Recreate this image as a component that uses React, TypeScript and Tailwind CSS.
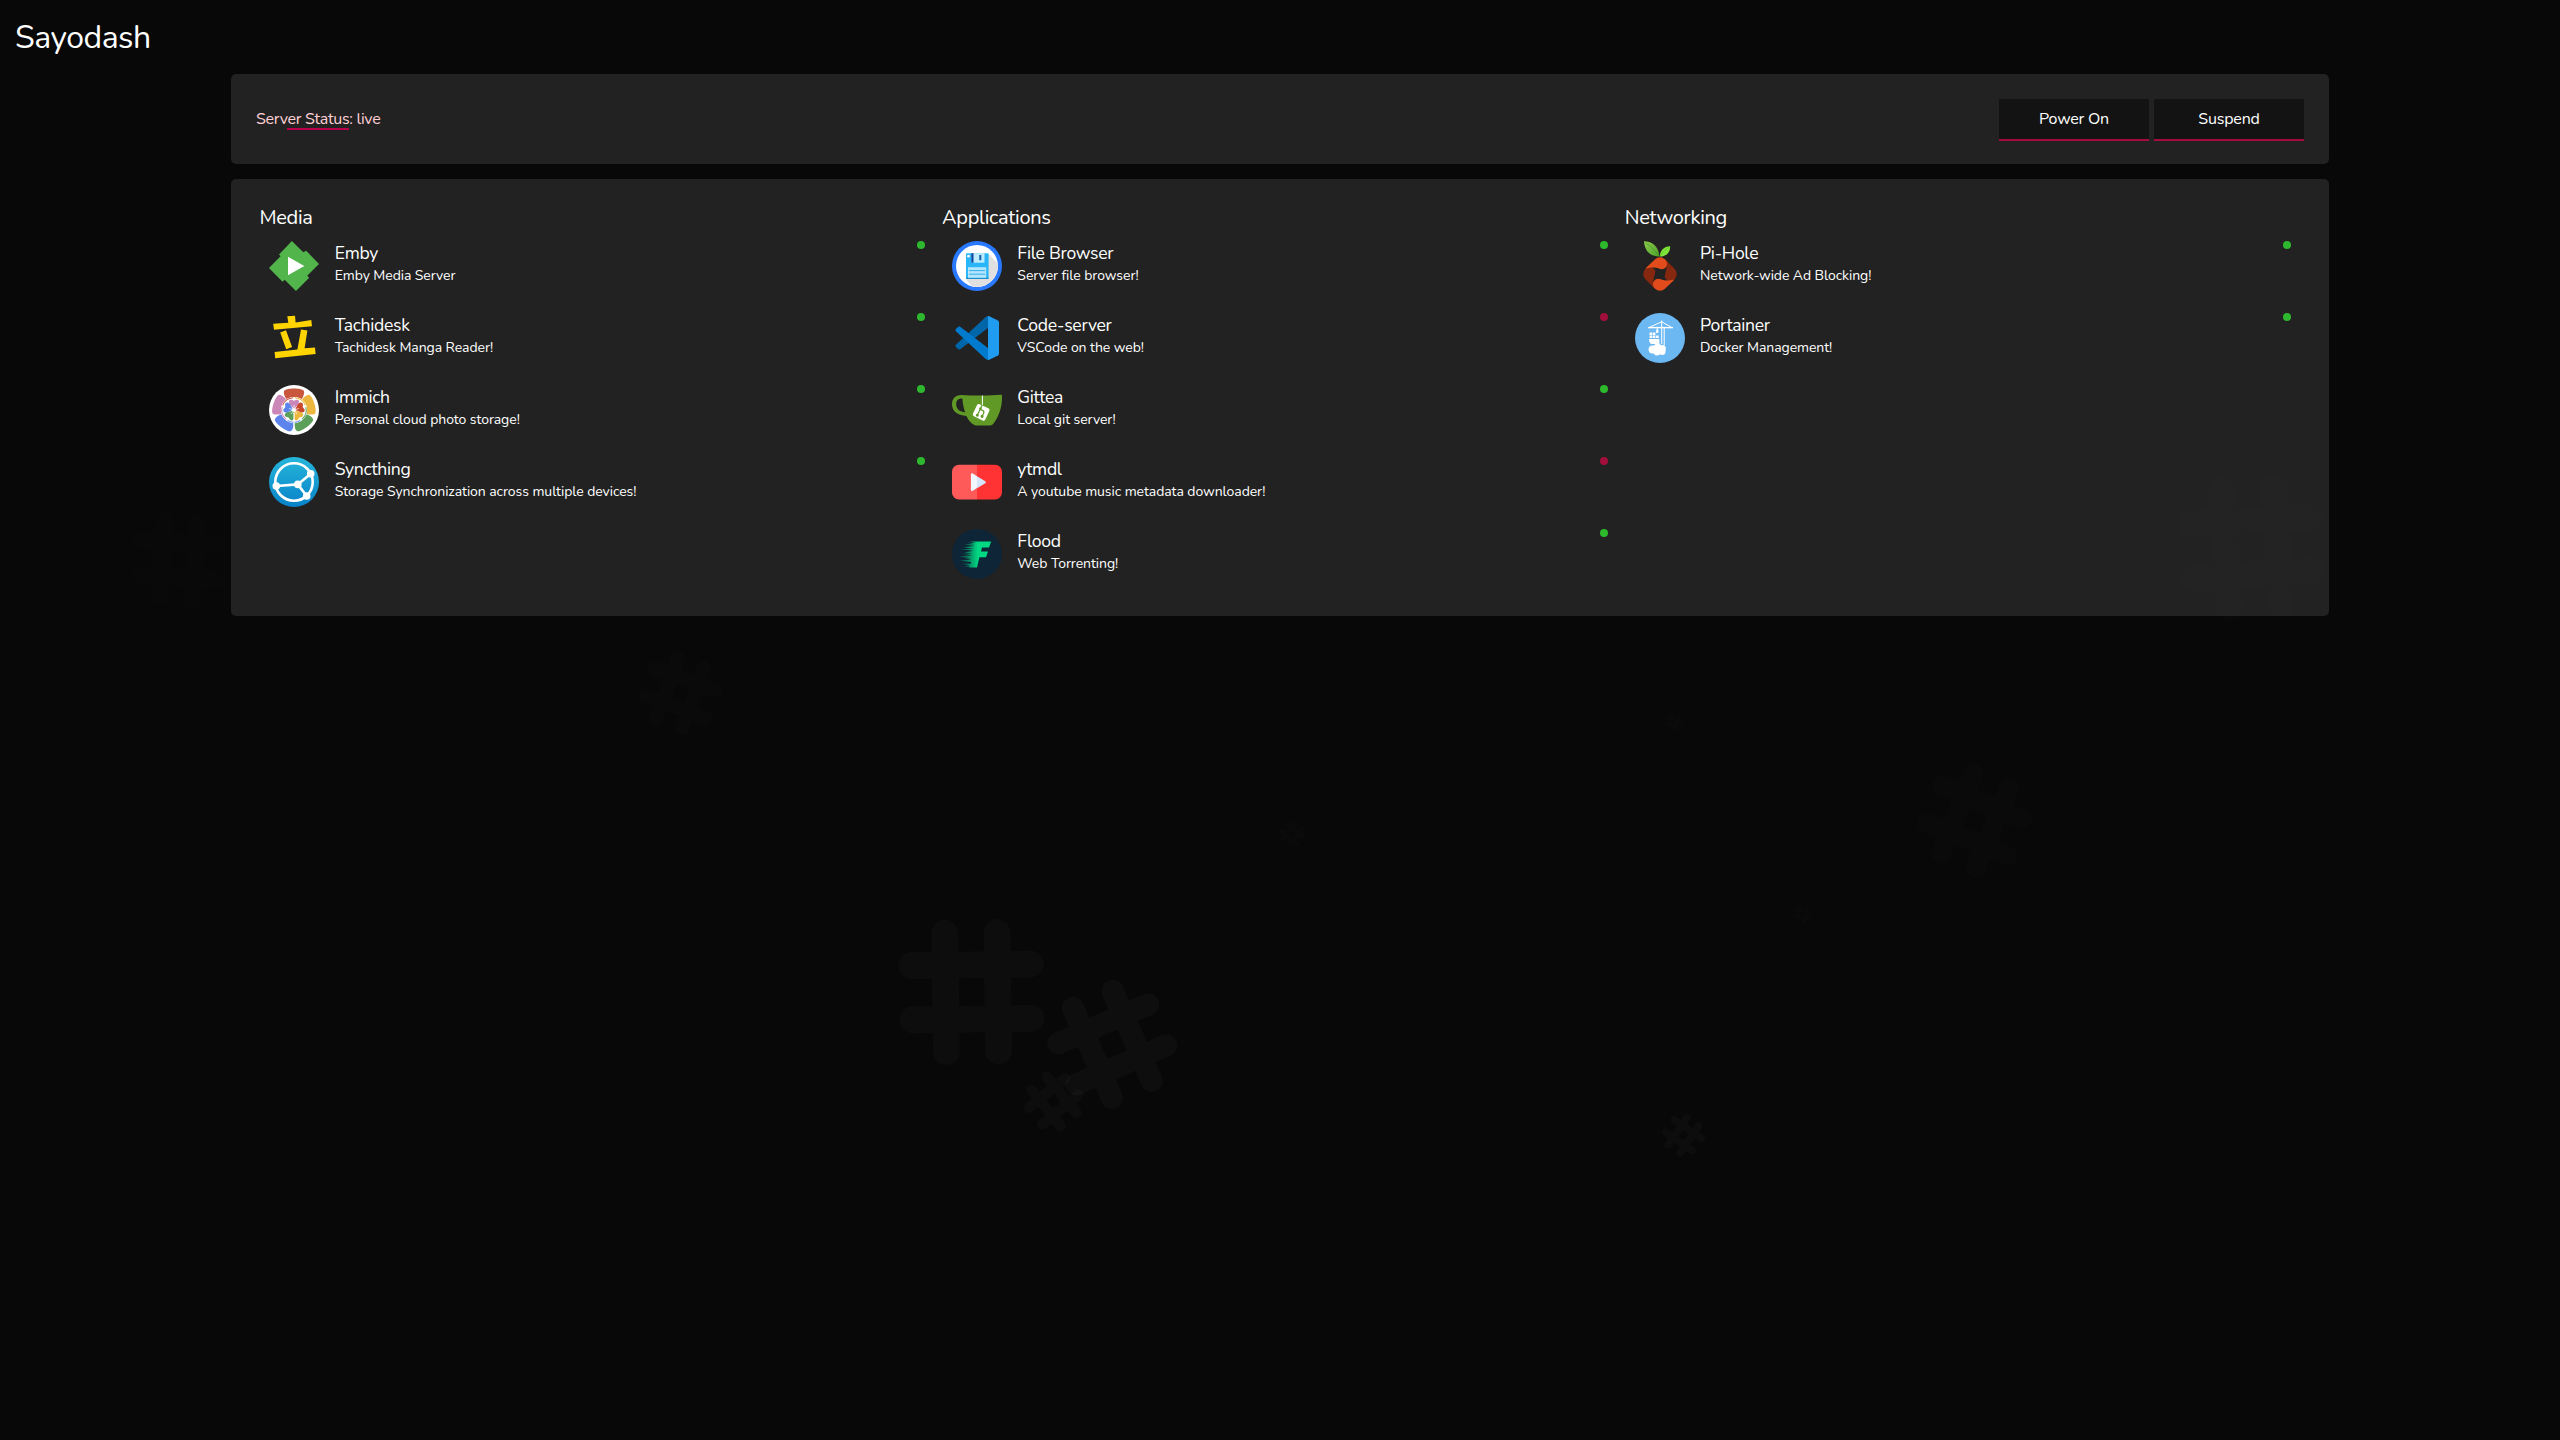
import type { ReactNode } from "react";

/* ---------- Service icons ---------- */

function EmbyIcon() {
  return (
    <svg viewBox="0 0 50 50" className="size-full">
      <path
        fill="#52b54b"
        d="M22.9 0 L34.3 11.3 L37.2 9.8 L50 23 L38.2 34.8 L40.2 36.8 L27 50 L15.7 38.7 L13.5 40.8 L0 27 L11.6 15.3 L10 13.6 Z"
      />
      <path fill="#fff" d="M19 15.8 L35.3 25 L19 34.2 Z" />
    </svg>
  );
}

function TachideskIcon() {
  return (
    <svg viewBox="0 0 50 50" className="size-full">
      <g fill="#ffd400">
        <path d="M18.3 3.3 L26 2.7 L26.6 9.6 L42.3 7.1 L43 13.2 L5 16.7 L4.2 10.8 L19.3 9.8 Z" />
        <path d="M11.2 19.4 L17 17.2 L23.1 34 L17.2 36.3 Z" />
        <path d="M32 16.6 L38.4 17.6 L35.6 35.3 L46 34.5 L46.6 41 L6.2 45.3 L5.6 39.1 L28.4 36.6 Z" />
      </g>
    </svg>
  );
}

const IMMICH_PETALS = ["#c9573d", "#edb73f", "#5c9f58", "#5c84ec", "#cb87b8"];
const IMMICH_CORE = ["#cb87b8", "#c9472d", "#edb73f", "#5c9f58", "#5c84ec"];

function ImmichIcon() {
  return (
    <svg viewBox="-25 -25 50 50" className="size-full">
      <circle r="25" fill="#fff" />
      {IMMICH_PETALS.map((color, i) => (
        <path
          key={color}
          fill={color}
          transform={`rotate(${i * 72})`}
          d="M-7.8 -11 C-9.3 -13.6 -10.7 -16.5 -10 -18.8 C-8.6 -22.3 8.6 -22.3 10 -18.8 C10.7 -16.5 9.3 -13.6 7.8 -11 Q0 -15 -7.8 -11 Z"
        />
      ))}
      <circle r="13" fill="#fff" />
      {IMMICH_PETALS.map((color, i) => (
        <path
          key={color}
          fill="none"
          stroke={color}
          strokeWidth="1"
          transform={`rotate(${i * 72 - 36})`}
          d="M-6.4 -10.4 A12.2 12.2 0 0 1 6.4 -10.4"
        />
      ))}
      {IMMICH_CORE.map((color, i) => (
        <path
          key={color}
          fill={color}
          transform={`rotate(${i * 72})`}
          d="M0 -1 L-4.2 -5.5 C-6 -8.4 -4.6 -10.4 -2.6 -10.2 L0 -9.2 L2.6 -10.2 C4.6 -10.4 6 -8.4 4.2 -5.5 Z"
        />
      ))}
      <circle r="1.8" fill="#fff" />
      <path stroke="#fff" strokeWidth="0.7" d="M0 0 V-5 M0 0 L4.8 -1.5 M0 0 L3 4 M0 0 L-3 4 M0 0 L-4.8 -1.5" />
      <path stroke="#fff" strokeWidth="1.2" d="M0 3 V20" />
    </svg>
  );
}

function SyncthingIcon() {
  return (
    <svg viewBox="0 0 50 50" className="size-full">
      <defs>
        <linearGradient id="syncthing" x1="0" y1="0" x2="0" y2="1">
          <stop offset="0" stopColor="#26b6db" />
          <stop offset="1" stopColor="#0882c8" />
        </linearGradient>
      </defs>
      <circle cx="25" cy="25" r="25" fill="url(#syncthing)" />
      <g fill="none" stroke="#fff" strokeWidth="2.6">
        <circle cx="25" cy="25" r="18.7" />
        <path d="M28.8 27.4 L41.7 16.8 M28.8 27.4 L37.7 39 M28.8 27.4 L7.5 29" />
      </g>
      <g fill="#fff">
        <circle cx="28.8" cy="27.4" r="3.8" />
        <circle cx="41.7" cy="16.8" r="3.8" />
        <circle cx="37.7" cy="39" r="3.8" />
        <circle cx="7.3" cy="29" r="3.8" />
      </g>
    </svg>
  );
}

function FileBrowserIcon() {
  return (
    <svg viewBox="0 0 50 50" className="size-full">
      <circle cx="25" cy="25" r="25" fill="#2979ff" />
      <circle cx="25" cy="25" r="21" fill="#fff" />
      <path fill="#e0e0e0" d="M36.5 12.8 L45.8 22.5 A21 21 0 0 1 19.8 45.2 L14 38 Z" />
      <rect x="14" y="12.2" width="22.6" height="25.8" rx="1" fill="#29b6f9" />
      <rect x="14" y="36.5" width="22.6" height="1.5" rx="0.7" fill="#1a8fd0" />
      <rect x="19.3" y="12.2" width="13.2" height="9.5" fill="#bdeafc" />
      <rect x="19.3" y="12.2" width="2.2" height="9.5" fill="#0d47a1" />
      <rect x="27.3" y="14" width="2" height="5.2" fill="#0d5fa8" />
      <circle cx="16.5" cy="15.2" r="1.4" fill="#fff" />
      <rect x="16" y="26.2" width="18.2" height="10.6" fill="#b3e5fc" />
      <path stroke="#29a9e8" strokeWidth="0.9" d="M17 29.6 H33.2 M17 33.2 H33.2" />
    </svg>
  );
}

function CodeServerIcon() {
  return (
    <svg viewBox="0 0 50 50" className="size-full">
      <path
        fill="#0065a9"
        d="M35.4 3.2 C36 3.1 36.6 3.2 37.2 3.4 L37.2 14 L8.2 36.3 C7.7 36.7 6.9 36.7 6.3 36.2 L3.9 33.9 C3.3 33.3 3.3 32.3 3.9 31.7 L33.7 4 C34.2 3.6 34.8 3.3 35.4 3.2 Z"
      />
      <path
        fill="#007acc"
        d="M35.4 46.8 C36 46.9 36.6 46.8 37.2 46.6 L37.2 35.9 L8.2 13.8 C7.7 13.4 6.9 13.4 6.3 13.8 L3.9 16.1 C3.3 16.7 3.3 17.7 3.9 18.3 L33.7 46 C34.2 46.4 34.8 46.7 35.4 46.8 Z"
      />
      <path
        fill="#1f9cf0"
        d="M36 46.9 V3.1 C36.6 3 37.2 3.1 37.7 3.4 L45.5 7.2 C46.4 7.6 47 8.5 47 9.5 V40.5 C47 41.5 46.4 42.4 45.5 42.8 L37.7 46.6 C37.2 46.9 36.6 47 36 46.9 Z"
      />
    </svg>
  );
}

function GiteaIcon() {
  return (
    <svg viewBox="0 0 50 50" className="size-full">
      <path
        fill="#609926"
        fillRule="evenodd"
        d="M9.5 10 C20 10.6 38 10.9 49 9.8 C50.2 9.7 50 11.5 50 14 C49.8 23 46.5 32 41.5 38.5 C40.5 39.9 39 40.6 37 40.6 L24.5 40.6 C21.5 40.5 17 36.5 15 32 C14.6 31.2 14 30.9 13 30.8 C5 30 0.2 26 0 19.5 C-0.1 13.5 3.5 9.8 9.5 10 Z M10.3 13.6 C6 13.4 3.8 16 4.2 20 C4.7 24.5 8 26.8 13.2 27.4 C11.5 23 10.7 18 10.3 13.6 Z"
      />
      <rect x="29.9" y="10.6" width="1" height="10" fill="#fff" />
      <g transform="rotate(25.5 29.2 27.2)">
        <rect x="22.4" y="20.6" width="13.6" height="13.4" rx="2" fill="#fff" />
        <g fill="none" stroke="#609926" strokeWidth="1.2">
          <path d="M27 20 V32 M27 25 H29.6 Q31.8 25 31.8 27 V30" />
        </g>
        <circle cx="27" cy="24.3" r="1.3" fill="#609926" />
        <circle cx="27" cy="31.6" r="1.5" fill="#609926" />
        <circle cx="31.8" cy="30.6" r="1.5" fill="#609926" />
      </g>
    </svg>
  );
}

function YoutubeIcon() {
  return (
    <svg viewBox="0 0 50 50" className="size-full">
      <path fill="#ff5a5a" d="M25 7.7 H7 A7 7 0 0 0 0 14.7 V35.6 A7 7 0 0 0 7 42.6 H25 Z" />
      <path fill="#ff3333" d="M25 7.7 H43 A7 7 0 0 1 50 14.7 V35.6 A7 7 0 0 1 43 42.6 H25 Z" />
      <path fill="#f2f6ff" d="M25 19.5 V31 L20.8 33.8 Q18.9 34.6 18.9 32.6 V17.8 Q18.9 15.8 20.8 16.6 L25 19.3 Z" />
      <path fill="#d6e6fe" d="M25 19.3 L33.3 24.2 Q34.6 25.2 33.3 26.2 L25 31.2 Z" />
    </svg>
  );
}

function FloodIcon() {
  return (
    <svg viewBox="0 0 50 50" className="size-full">
      <defs>
        <linearGradient id="flood" x1="0" y1="0" x2="1" y2="0">
          <stop offset="0.05" stopColor="#00d883" stopOpacity="0.15" />
          <stop offset="0.6" stopColor="#00d883" />
        </linearGradient>
      </defs>
      <circle cx="25" cy="25" r="25" fill="#0e2537" />
      <path
        fill="url(#flood)"
        d="M39.2 12.6 L37 18.6 H30 L29 22.4 H36 L34 28.2 H27.4 L25 38.6 H17 L17.6 37.6 H11.5 L18.4 36.2 L9 34.8 H18.8 L19 33 L6.5 31.6 L19.4 30.4 L12 29.2 H20 L6 27.6 L20.6 26.2 L9.5 24.8 H21 L12 23.4 L21.4 21.8 L7.5 20 H22 L11 18.2 L22.4 17 L12 15.2 H23 L15.5 13.8 H24 L18 12.6 Z"
      />
    </svg>
  );
}

function PiHoleIcon() {
  return (
    <svg viewBox="0 0 50 50" className="size-full">
      <defs>
        <linearGradient id="leaf" x1="0" y1="0" x2="1" y2="1">
          <stop offset="0" stopColor="#8ccc4a" />
          <stop offset="1" stopColor="#4ea22a" />
        </linearGradient>
      </defs>
      <path fill="url(#leaf)" d="M9 0.2 C16 0.4 23.4 4 24.4 15.4 C15 15.6 9.6 10 9 0.2 Z" />
      <path stroke="#3f8f26" strokeWidth="0.6" fill="none" d="M11 2 Q18 6 23.6 14.6" />
      <path fill="#7fe53a" d="M35.2 5.2 C35.2 11.6 31 15.6 24.8 15.6 C25 9.8 28.6 5.2 35.2 5.2 Z" />
      <path stroke="#5cc02c" strokeWidth="0.6" fill="none" d="M34 6.4 Q28 9.8 25.4 15" />
      {/* Four interlocking lobes around a diamond-shaped hole */}
      {[90, 270, 0, 180].map((turn) => (
        <path
          key={turn}
          fill={turn % 180 === 0 ? "#e24c1c" : "#86270f"}
          transform={`rotate(${turn} 25 33)`}
          d="M19.8 18.4 Q25 14 30.2 18.4 C33 21.6 32.4 25.4 29.4 27.6 C26.4 29.6 23.4 26.6 18.4 26.6 Q14.4 26.6 11 27.6 Q10.4 27.6 11.4 26.6 Z"
        />
      ))}
    </svg>
  );
}

function PortainerIcon() {
  return (
    <svg viewBox="0 0 50 50" className="size-full">
      <circle cx="25" cy="25" r="25" fill="#6bb8f3" />
      <g fill="none" stroke="#fff" strokeWidth="1">
        <path d="M13 14.6 H38" strokeWidth="1.4" />
        <path d="M15 14 L26.7 8.8 L36 14 M26.7 7.5 V31 M29.2 14.6 V32 M22.3 14.6 V20" />
      </g>
      <g fill="#fff">
        <rect x="21.2" y="16.6" width="2.2" height="3.4" />
        <path d="M14.6 19.4 h2.6 v2.5 h-2.6z M17.8 19.4 h2.6 v2.5 h-2.6z M14.6 22.6 h2.6 v2.5 h-2.6z M17.8 22.6 h2.6 v2.5 h-2.6z M21.1 22.6 h2.6 v2.5 h-2.6z" />
        <path d="M14 26 H24.4 V31 H16 Q13.8 29 14 26 Z" />
        <circle cx="17.6" cy="36.6" r="4" />
        <circle cx="22.6" cy="34.6" r="4.2" />
        <circle cx="27.4" cy="35.4" r="3.4" />
        <circle cx="27.2" cy="38.6" r="3.4" />
        <circle cx="22" cy="38.8" r="3.6" />
      </g>
    </svg>
  );
}

/* ---------- Data ---------- */

type Service = { name: string; about: string; up: boolean; icon: ReactNode };

const GROUPS: { title: string; services: Service[] }[] = [
  {
    title: "Media",
    services: [
      { name: "Emby", about: "Emby Media Server", up: true, icon: <EmbyIcon /> },
      { name: "Tachidesk", about: "Tachidesk Manga Reader!", up: true, icon: <TachideskIcon /> },
      { name: "Immich", about: "Personal cloud photo storage!", up: true, icon: <ImmichIcon /> },
      { name: "Syncthing", about: "Storage Synchronization across multiple devices!", up: true, icon: <SyncthingIcon /> },
    ],
  },
  {
    title: "Applications",
    services: [
      { name: "File Browser", about: "Server file browser!", up: true, icon: <FileBrowserIcon /> },
      { name: "Code-server", about: "VSCode on the web!", up: false, icon: <CodeServerIcon /> },
      { name: "Gittea", about: "Local git server!", up: true, icon: <GiteaIcon /> },
      { name: "ytmdl", about: "A youtube music metadata downloader!", up: false, icon: <YoutubeIcon /> },
      { name: "Flood", about: "Web Torrenting!", up: true, icon: <FloodIcon /> },
    ],
  },
  {
    title: "Networking",
    services: [
      { name: "Pi-Hole", about: "Network-wide Ad Blocking!", up: true, icon: <PiHoleIcon /> },
      { name: "Portainer", about: "Docker Management!", up: true, icon: <PortainerIcon /> },
    ],
  },
];

/* Floating hash marks: centre, size, tilt and strength of each. */
const HASHES = [
  { x: 971.7, y: 992, size: 145, tilt: -0.8, alpha: 0.018 },
  { x: 1112.3, y: 1044.3, size: 120, tilt: -23.4, alpha: 0.022 },
  { x: 1053.7, y: 1101.3, size: 57, tilt: -39.3, alpha: 0.02 },
  { x: 2251.7, y: 547.7, size: 145, tilt: -3.4, alpha: 0.004 },
  { x: 178.6, y: 560, size: 93, tilt: 4, alpha: 0.004 },
  { x: 680, y: 693, size: 78, tilt: 20, alpha: 0.007 },
  { x: 1974.7, y: 820.7, size: 106, tilt: 22.3, alpha: 0.009 },
  { x: 1292.4, y: 834, size: 25, tilt: 40, alpha: 0.009 },
  { x: 1673.6, y: 722.7, size: 18, tilt: 20, alpha: 0.006 },
  { x: 1802, y: 914, size: 19, tilt: 10, alpha: 0.008 },
  { x: 1683.5, y: 1135.3, size: 40, tilt: 34.4, alpha: 0.018 },
];

function HashField() {
  return (
    <svg viewBox="0 0 2560 1440" className="pointer-events-none absolute inset-0 size-full" aria-hidden="true">
      {HASHES.map((h) => (
        <g
          key={h.x}
          opacity={h.alpha}
          transform={`translate(${h.x} ${h.y}) rotate(${h.tilt}) scale(${h.size / 100})`}
        >
          <path
            d="M-18 -40.8 V40.8 M18 -40.8 V40.8 M-40.8 -18.7 H40.8 M-40.8 18.7 H40.8"
            stroke="#fff"
            strokeWidth="18.4"
            strokeLinecap="round"
          />
        </g>
      ))}
    </svg>
  );
}

function ServiceRow({ service }: { service: Service }) {
  return (
    <a className="flex h-[72px] items-start px-[13.3px] pt-2.5">
      <span className="block size-[50px] shrink-0">{service.icon}</span>
      <span className="ml-[15.4px] flex grow flex-col pt-px">
        <span className="text-[17.6px] leading-[23px] tracking-[-0.3px]">{service.name}</span>
        <span className="text-sm leading-[21px] tracking-[-0.07px]">{service.about}</span>
      </span>
      <span className={service.up ? "size-2 rounded-full bg-[#2eb82e]" : "size-2 rounded-full bg-[#a30f3c]"} />
    </a>
  );
}

function ActionButton({ children }: { children: string }) {
  return (
    <button className="h-[42px] w-[150px] border-b-2 border-[#a30c3c] bg-[#131313] text-base leading-[40px] tracking-[-0.2px]">
      {children}
    </button>
  );
}

export default function App() {
  return (
    <div className="relative h-[1440px] w-full overflow-hidden bg-[#080808] font-['Nunito','Lato',sans-serif] font-normal text-white">
      <h1 className="flex h-[74px] items-center px-[15px] pt-0.5 text-[32px] leading-none tracking-[-0.5px]">
        Sayodash
      </h1>

      <main className="mx-[231px] flex flex-col gap-[15px]">
        <section className="flex h-[90px] items-start justify-between rounded-[5px] bg-[#222] p-[25px]">
          <p className="flex flex-col items-center pt-[9px] text-base leading-[22px] tracking-[-0.3px] text-[#ffd0d6] after:-mt-0.5 after:h-0.5 after:w-1/2 after:bg-[#b8004c]">
            Server Status: live
          </p>
          <div className="flex gap-[5px]">
            <ActionButton>Power On</ActionButton>
            <ActionButton>Suspend</ActionButton>
          </div>
        </section>

        <section className="grid h-[437px] grid-cols-3 rounded-[5px] bg-[#222] p-[25px]">
          {GROUPS.map((group) => (
            <div key={group.title}>
              <h2 className="h-[27px] px-[3.4px] text-xl leading-[27px] tracking-[-0.29px]">{group.title}</h2>
              {group.services.map((service) => (
                <ServiceRow key={service.name} service={service} />
              ))}
            </div>
          ))}
        </section>
      </main>

      <HashField />
    </div>
  );
}
